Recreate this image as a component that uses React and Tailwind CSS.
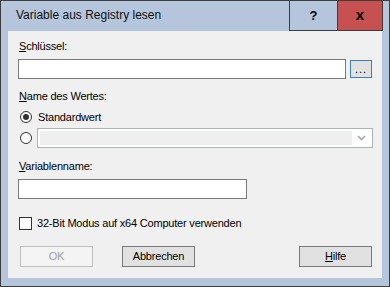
import React from "react";

const font = { fontFamily: '"Liberation Sans", Arial, sans-serif' };

function Radio({ checked }) {
  return (
    <div className="w-[12px] h-[12px] rounded-full border border-[#333333] bg-white flex items-center justify-center shrink-0">
      {checked && <div className="w-[6px] h-[6px] rounded-full bg-[#333333]" />}
    </div>
  );
}

export default function App() {
  return (
    <div
      className="w-[390px] h-[287px] bg-[#b5c6dc] border border-[#3d3d3d] flex flex-col text-[11px] leading-[13px] text-black"
      style={font}
    >
      {/* title bar */}
      <div className="h-[30px] flex items-stretch shrink-0">
        <div className="flex-1 flex items-center pl-[15px] text-[12px] text-[#111] pb-[1px]">
          Variable aus Registry lesen
        </div>
        <div className="w-[48px] border-l border-b border-[#3d3d3d] flex items-center justify-center text-[13px] font-bold pb-[1px]">
          ?
        </div>
        <div className="w-[46px] bg-[#c75050] border-l border-r border-b border-[#3d3d3d] flex items-center justify-center text-[15px] font-bold pb-[3px]">
          x
        </div>
        <div className="w-[6px]" />
      </div>

      {/* client */}
      <div className="mx-[7px] h-[247px] bg-[#f0f0f0] flex flex-col pl-[10px] pt-[9px] tracking-[-0.2px]">
        <div className="ml-[1px] h-[13px]">
          <span className="underline">S</span>chlüssel:
        </div>
        <div className="mt-[6px] flex items-start">
          <div className="w-[328px] h-[20px] bg-white border border-[#7a7a7a]" />
          <div className="ml-[4px] mt-[1px] w-[22px] h-[18px] bg-[#e1e1e1] border border-[#3c7fb1] flex items-end justify-center text-[11px] leading-[13px] tracking-[1px] pb-[1px]">
            ...
          </div>
        </div>
        <div className="mt-[11px] ml-[1px] h-[13px]">
          <span className="underline">N</span>ame des Wertes:
        </div>
        <div className="mt-[7px] h-[14px] flex items-center">
          <div className="ml-[2px]">
            <Radio checked />
          </div>
          <div className="ml-[6px]">Standardwert</div>
        </div>
        <div className="mt-[4px] h-[20px] flex items-center">
          <div className="ml-[2px]">
            <Radio />
          </div>
          <div className="ml-[5px] w-[336px] h-[20px] border border-[#adb2b5] bg-white flex items-stretch p-[2px]">
            <div className="flex-1 bg-[#efefef]" />
            <div className="w-[18px] flex items-center justify-center">
              <svg width="9" height="6" viewBox="0 0 9 6">
                <path d="M1 1 L4.5 4.5 L8 1" fill="none" stroke="#a6a6a6" strokeWidth="1.6" />
              </svg>
            </div>
          </div>
        </div>
        <div className="mt-[12px] ml-[1px] h-[13px]">
          <span className="underline">V</span>ariablenname:
        </div>
        <div className="mt-[6px] w-[229px] h-[20px] bg-white border border-[#7a7a7a]" />
        <div className="mt-[18px] h-[13px] flex items-center">
          <div className="ml-[1px] w-[13px] h-[13px] border border-[#333333] bg-white shrink-0" />
          <div className="ml-[5px]">32-Bit Modus auf x64 Computer verwenden</div>
        </div>
        <div className="mt-[16px] h-[21px] flex items-stretch">
          <div className="ml-[2px] w-[73px] border border-[#bfbfbf] bg-[#f4f4f4] flex items-center justify-center text-[#a0a0a0]">
            OK
          </div>
          <div className="ml-[29px] w-[73px] border border-[#7a7a7a] bg-[#e1e1e1] flex items-center justify-center">
            Abbrechen
          </div>
          <div className="ml-[104px] w-[73px] border border-[#7a7a7a] bg-[#e1e1e1] flex items-center justify-center">
            <span className="underline">H</span>ilfe
          </div>
        </div>
      </div>
    </div>
  );
}
